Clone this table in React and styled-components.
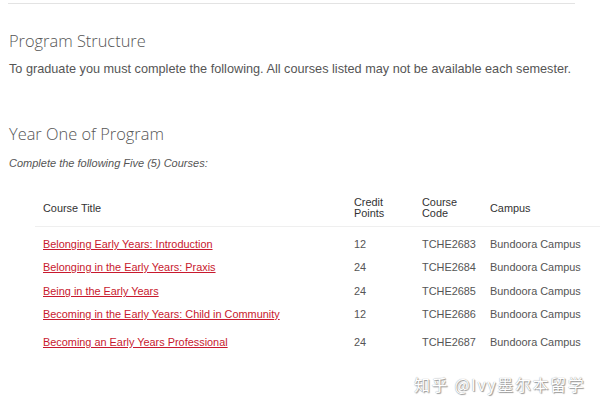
import styled, { createGlobalStyle } from "styled-components"

const Global = createGlobalStyle`
  html, body { margin: 0; padding: 0; background: #fff; }
  body { font-family: "Liberation Sans", Arial, sans-serif; color: #555; }
`

const Page = styled.div`
  position: relative;
  width: 600px;
  height: 414px;
  overflow: hidden;
  padding: 3px 0 0 9px;
  box-sizing: border-box;
`

const Rule = styled.hr`
  margin: 0 25px 0 -1px;
  border: 0;
  border-top: 1px solid #e3e3e3;
`

const Heading = styled.h2`
  margin: ${p => p.$top}px 0 0;
  font-family: "Open Sans", sans-serif;
  font-weight: 300;
  font-size: 16.4px;
  line-height: 20px;
  color: #555;
`

const Lead = styled.p`
  margin: 10px 0 0;
  font-size: 12.7px;
  line-height: 16px;
  color: #555;
`

const Note = styled.p`
  margin: 12px 0 0;
  font-size: 11px;
  line-height: 14px;
  font-style: italic;
  color: #555;
`

const Table = styled.table`
  margin: 22px 0 0 26px;
  width: 565px;
  table-layout: fixed;
  border-collapse: collapse;
  font-size: 10.9px;
  color: #555;
`

const Th = styled.th`
  box-sizing: border-box;
  text-align: left;
  font-weight: normal;
  padding: 5px 8px 7px;
  line-height: 11px;
  height: 24px;
  width: ${p => (p.$w ? `${p.$w}px` : "auto")};
  border-bottom: 1px solid #efefef;
  color: #333;
`

const Td = styled.td`
  box-sizing: border-box;
  padding: 11px 8px 0;
  height: ${p => p.$h}px;
  line-height: 12px;
  vertical-align: top;
  white-space: nowrap;
`

const CourseLink = styled.a`
  color: #c8192e;
  text-decoration: underline;
`

const Watermark = styled.div`
  position: absolute;
  left: 414px;
  top: 372px;
  font-family: "Noto Sans CJK SC", sans-serif;
  font-size: 16px;
  color: #fff;
  text-shadow: 0 0 1px #888, 1px 1px 1px #999;
  letter-spacing: 1.6px;
`

const courses = [
  ["Belonging Early Years: Introduction", 12, "TCHE2683", 23],
  ["Belonging in the Early Years: Praxis", 24, "TCHE2684", 24],
  ["Being in the Early Years", 24, "TCHE2685", 23],
  ["Becoming in the Early Years: Child in Community", 12, "TCHE2686", 28],
  ["Becoming an Early Years Professional", 24, "TCHE2687", 30],
]

export default function App() {
  return (
    <Page>
      <Global />
      <Rule />
      <Heading $top={27}>Program Structure</Heading>
      <Lead>To graduate you must complete the following. All courses listed may not be available each semester.</Lead>
      <Heading $top={47}>Year One of Program</Heading>
      <Note>Complete the following Five (5) Courses:</Note>
      <Table>
        <thead>
          <tr>
            <Th $w={311}>Course Title</Th>
            <Th $w={68}>Credit<br />Points</Th>
            <Th $w={68}>Course<br />Code</Th>
            <Th>Campus</Th>
          </tr>
        </thead>
        <tbody>
          {courses.map(([title, pts, code, h]) => (
            <tr key={code}>
              <Td $h={h}><CourseLink href="#">{title}</CourseLink></Td>
              <Td $h={h}>{pts}</Td>
              <Td $h={h}>{code}</Td>
              <Td $h={h}>Bundoora Campus</Td>
            </tr>
          ))}
        </tbody>
      </Table>
      <Watermark>知乎 @Ivy墨尔本留学</Watermark>
    </Page>
  )
}
